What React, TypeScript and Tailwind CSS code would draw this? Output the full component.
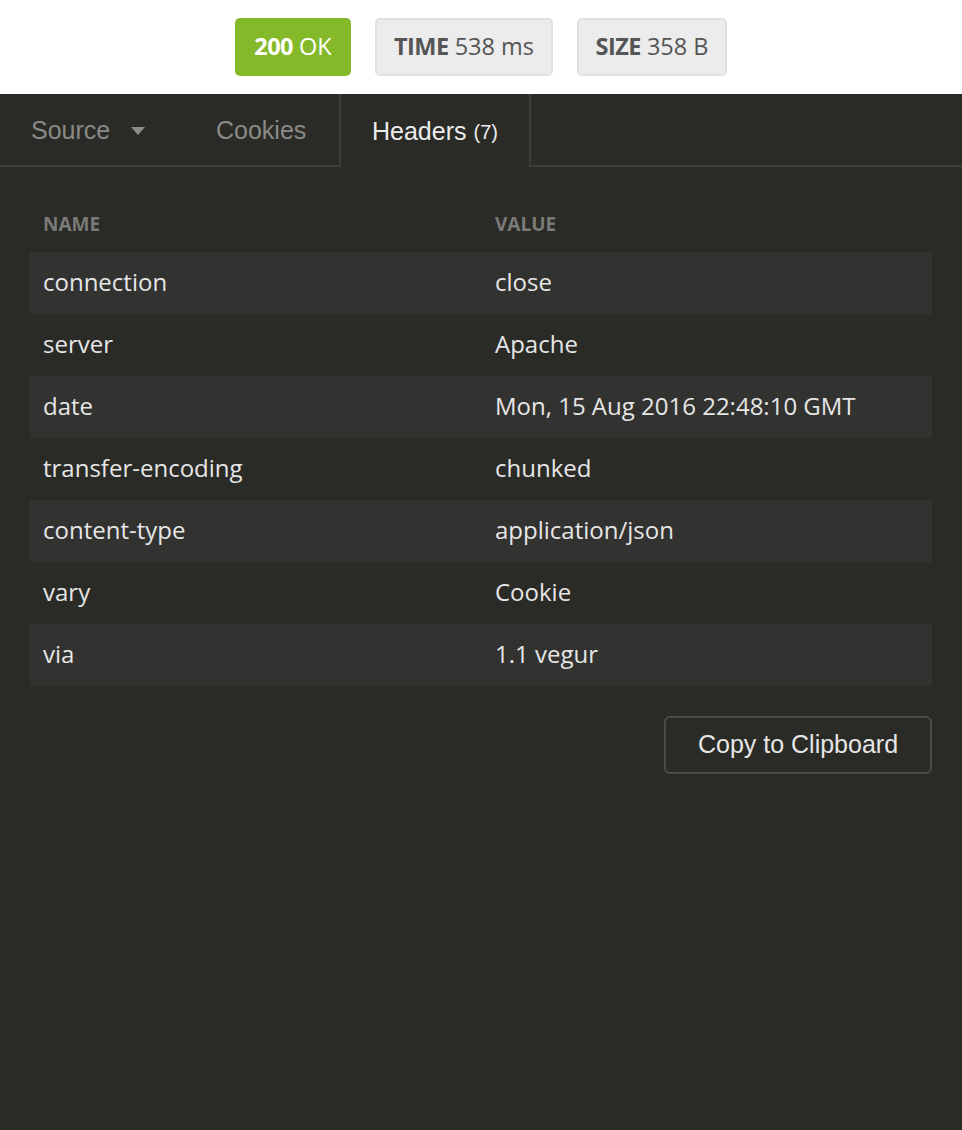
import React from 'react';

const headers: [string, string][] = [
  ['connection', 'close'],
  ['server', 'Apache'],
  ['date', 'Mon, 15 Aug 2016 22:48:10 GMT'],
  ['transfer-encoding', 'chunked'],
  ['content-type', 'application/json'],
  ['vary', 'Cookie'],
  ['via', '1.1 vegur'],
];

const openSans = { fontFamily: '"Open Sans", "Noto Sans", sans-serif' };
const helv = { fontFamily: '"Liberation Sans", Arial, sans-serif' };

export default function App() {
  return (
    <div className="w-[962px] h-[1130px] flex flex-col bg-[#2a2a26]">
      {/* Status bar */}
      <div className="h-[94px] bg-white flex items-center justify-center gap-6 text-[23.5px]" style={openSans}>
        <div className="w-[116px] h-[58px] flex items-center justify-center rounded-[5px] bg-[#84b92a] text-white">
          <span className="font-bold tracking-[-0.5px]">200</span>
          <span className="ml-[6px]">OK</span>
        </div>
        <div className="w-[178px] h-[58px] flex items-center justify-center rounded-[5px] bg-[#ececec] border-2 border-[#e0e0e0] text-[#555]">
          <span className="font-bold tracking-[-0.5px]">TIME</span>
          <span className="ml-[6px]">538 ms</span>
        </div>
        <div className="w-[150px] h-[58px] flex items-center justify-center rounded-[5px] bg-[#ececec] border-2 border-[#e0e0e0] text-[#555]">
          <span className="font-bold tracking-[-0.5px]">SIZE</span>
          <span className="ml-[6px]">358 B</span>
        </div>
      </div>

      {/* Tabs */}
      <div className="flex h-[73px] text-[25px] pt-[3px]" style={helv}>
        <div className="w-[183px] flex items-center pl-[31px] text-[#8a8a88] border-b-2 border-[#3c3c3a]">
          Source
          <svg className="ml-[21px]" width="14" height="8" viewBox="0 0 14 8">
            <path d="M0 0 L14 0 L7 8 Z" fill="#8a8a88" />
          </svg>
        </div>
        <div className="w-[156px] flex items-center pl-[33px] text-[#8a8a88] border-b-2 border-[#3c3c3a]">
          Cookies
        </div>
        <div className="w-[192px] -mt-[3px] pt-[3px] flex items-center pl-[31px] text-[#ececec] border-l-2 border-r-2 border-[#3c3c3a]">
          Headers
          <span className="ml-[7px] text-[20px]">(7)</span>
        </div>
        <div className="flex-1 border-b-2 border-[#3c3c3a]" />
      </div>

      {/* Headers table */}
      <div className="px-[30px] pt-[42px]" style={openSans}>
        <div className="flex h-[43px] text-[19px] font-bold text-[#7a7a78]">
          <div className="w-[452px] pl-[13px] pt-[1px]">NAME</div>
          <div className="flex-1 pl-[13px] pt-[1px]">VALUE</div>
        </div>
        {headers.map(([name, value], i) => (
          <div
            key={name}
            className={`flex h-[62px] items-center text-[24px] text-[#e6e6e6] ${i % 2 === 0 ? 'bg-[#323230]' : ''}`}
          >
            <div className="w-[452px] pl-[13px] -mt-[3px]">{name}</div>
            <div className="flex-1 pl-[13px] -mt-[3px]">{value}</div>
          </div>
        ))}
        <div className="flex justify-end mt-[30px]">
          <button
            className="w-[268px] h-[58px] rounded-[6px] border-2 border-[#4a4a48] text-[25px] text-[#e6e6e6]"
            style={helv}
          >
            Copy to Clipboard
          </button>
        </div>
      </div>
    </div>
  );
}
